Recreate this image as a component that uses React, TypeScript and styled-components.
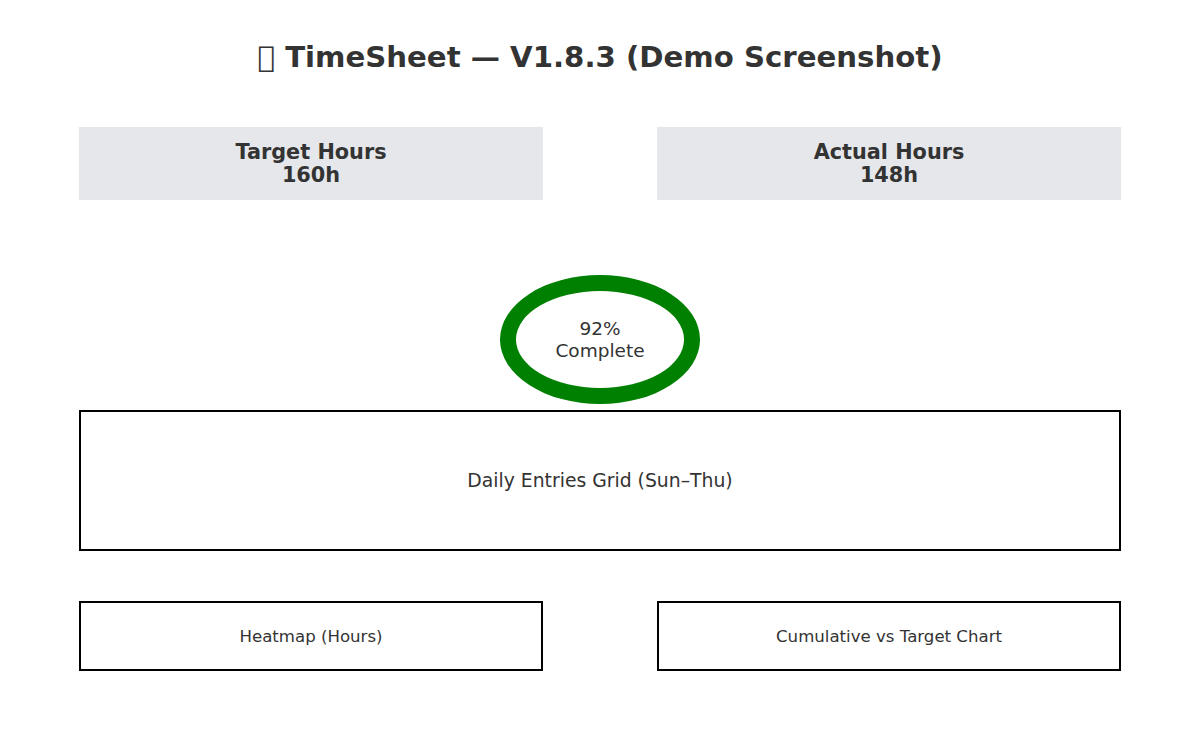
import React from "react";
import styled, { createGlobalStyle } from "styled-components";

const GlobalStyle = createGlobalStyle`
  body {
    margin: 0;
    background: #fff;
    font-family: "DejaVu Sans", "Noto Sans", sans-serif;
    color: #333;
  }
`;

const Page = styled.div`
  width: 1042px;
  margin: 0 auto;
  padding-top: 40px;
  display: flex;
  flex-direction: column;
  align-items: center;
`;

const Title = styled.h1`
  margin: 0;
  font-size: 29.2px;
  line-height: 34px;
  font-weight: bold;
  text-align: center;
`;

const Row = styled.div<{ $top: number }>`
  width: 100%;
  display: grid;
  grid-template-columns: 464px 464px;
  justify-content: space-between;
  margin-top: ${(p) => p.$top}px;
`;

const Stat = styled.div`
  background: #e5e7eb;
  height: 73px;
  display: flex;
  flex-direction: column;
  justify-content: center;
  align-items: center;
  font-size: 20.8px;
  line-height: 23px;
  font-weight: bold;
`;

const Ring = styled.div`
  margin-top: 75px;
  width: 200px;
  height: 129px;
  box-sizing: border-box;
  border: 16px solid #008000;
  border-radius: 50%;
  display: flex;
  flex-direction: column;
  justify-content: center;
  align-items: center;
  font-size: 18.5px;
  line-height: 22px;
  text-align: center;
`;

const Panel = styled.div<{ $height: number; $size: number }>`
  box-sizing: border-box;
  width: 100%;
  height: ${(p) => p.$height}px;
  border: 2px solid #000;
  display: flex;
  justify-content: center;
  align-items: center;
  font-size: ${(p) => p.$size}px;
`;

const GridPanel = styled(Panel)`
  margin-top: 6px;
`;

export default function App() {
  const target = 160;
  const actual = 148;
  const pct = Math.floor((actual / target) * 100);

  return (
    <>
      <GlobalStyle />
      <Page>
        <Title>{"\u{10FFFE}"} TimeSheet — V1.8.3 (Demo Screenshot)</Title>
        <Row $top={53}>
          <Stat>
            <span>Target Hours</span>
            <span>{target}h</span>
          </Stat>
          <Stat>
            <span>Actual Hours</span>
            <span>{actual}h</span>
          </Stat>
        </Row>
        <Ring>
          <span>{pct}%</span>
          <span>Complete</span>
        </Ring>
        <GridPanel $height={141} $size={18.8}>
          Daily Entries Grid (Sun–Thu)
        </GridPanel>
        <Row $top={50}>
          <Panel $height={70} $size={16.6}>Heatmap (Hours)</Panel>
          <Panel $height={70} $size={16.6}>Cumulative vs Target Chart</Panel>
        </Row>
      </Page>
    </>
  );
}
